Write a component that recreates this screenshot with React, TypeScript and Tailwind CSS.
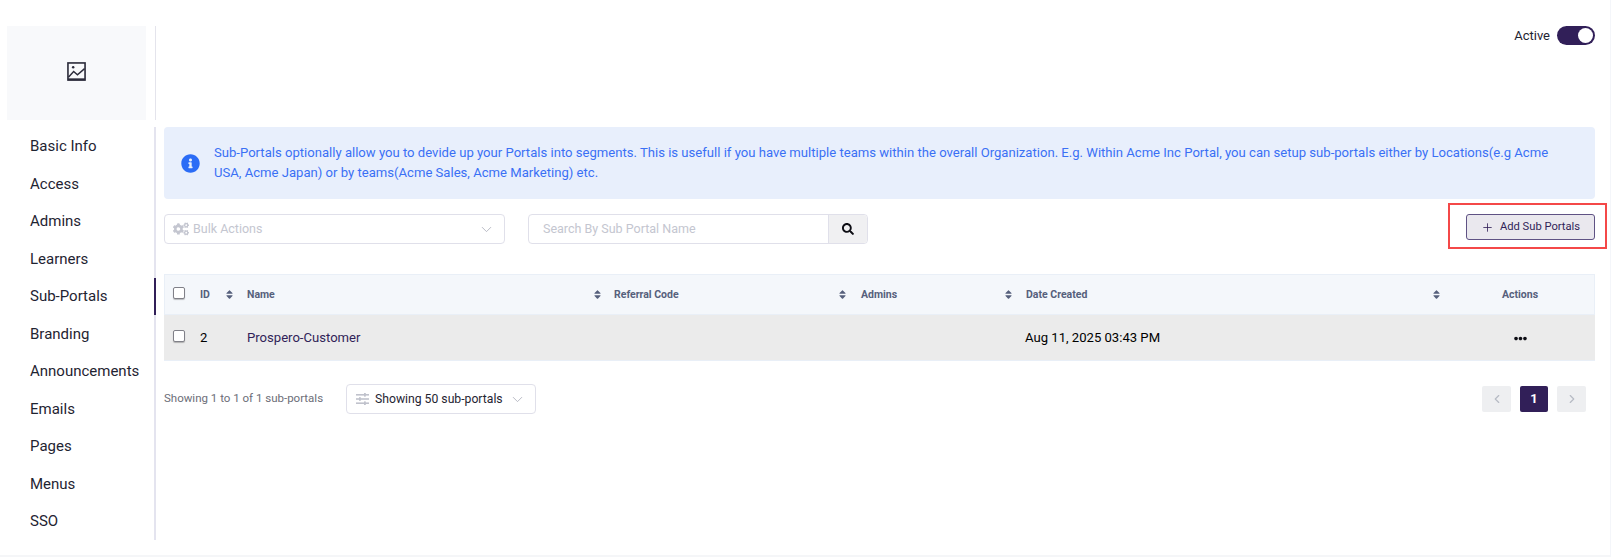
import React from "react"
import { FaInfoCircle, FaCogs, FaSearch, FaSort, FaEllipsisH } from "react-icons/fa"
import { ChevronDown, ChevronLeft, ChevronRight, Plus } from "lucide-react"

const navItems = ["Basic Info", "Access", "Admins", "Learners", "Sub-Portals", "Branding", "Announcements", "Emails", "Pages", "Menus", "SSO"]

const ImageIcon = () => (
    <svg width="19" height="19" viewBox="0 0 20 20" fill="none" stroke="#2b2b3a" strokeWidth="1.7">
        <rect x="1" y="1" width="18" height="18" />
        <path d="M1.5 16L7 10l4 3.5L18.5 7" strokeWidth="1.5" />
        <path d="M1 18.2h18" strokeWidth="2" />
        <circle cx="6.5" cy="5.5" r="1.3" fill="#2b2b3a" stroke="none" />
    </svg>
)

const SliderIcon = () => (
    <svg width="13" height="12" viewBox="0 0 13 12" className="mr-[6px]" fill="#c0c2cc">
        <rect x="0" y="1" width="13" height="1.6" />
        <rect x="8" y="0" width="1.8" height="3.6" />
        <rect x="0" y="5.2" width="13" height="1.6" />
        <rect x="3" y="4.2" width="1.8" height="3.6" />
        <rect x="0" y="9.4" width="13" height="1.6" />
        <rect x="8" y="8.4" width="1.8" height="3.6" />
    </svg>
)

const Checkbox = () => (
    <div className="w-[12px] h-[12px] rounded-[2px] border border-[#808088] bg-white shadow-[0_1px_1px_rgba(0,0,0,0.25)]" />
)

const Th = ({ label, className }: { label: string; className: string }) => (
    <div className={"flex items-center justify-between " + className}>
        <span>{label}</span>
        <FaSort className="text-[11px] text-[#56607c]" />
    </div>
)

const App = () => {
    return (
        <div className="w-full h-[557px] bg-white border-r border-[#f4f6fa] flex flex-col overflow-hidden font-['Roboto',sans-serif] text-[#1f2432]">
            <div className="flex flex-1 flex-col pt-[26px] pl-[7px] pr-[15px]">
                <div className="flex h-[94px]">
                    <div className="w-[139px] bg-[#f8f9fb] flex items-center justify-center pb-[4px]">
                        <ImageIcon />
                    </div>
                    <div className="ml-[9px] w-[1px] bg-[#e4e4ec]" />
                    <div className="flex-1 flex justify-end items-start">
                        <div className="flex items-center gap-[7px]">
                            <span className="text-[13px]">Active</span>
                            <div className="w-[38px] h-[19px] rounded-full bg-[#311f58] flex items-center justify-end pr-[2px]">
                                <div className="w-[15px] h-[15px] rounded-full bg-white" />
                            </div>
                        </div>
                    </div>
                </div>

                <div className="flex mt-[7px] h-[413px]">
                    <nav className="w-[149px] border-r-2 border-[#e4e4ef] flex flex-col pt-[1px]">
                        {navItems.map((item) => (
                            <div key={item} className={"h-[37.5px] pl-[23px] flex items-center text-[15px] -mr-[2px] " + (item === "Sub-Portals" ? "border-r-2 border-[#311f58]" : "")}>
                                {item}
                            </div>
                        ))}
                    </nav>

                    <main className="flex-1 ml-[8px] min-w-0">
                        <div className="h-[72px] rounded bg-[#e8effc] flex items-center pl-[17px] pr-[30px] text-[#3a70f5] text-[13.1px] leading-[20px]">
                            <FaInfoCircle className="text-[19px] shrink-0 text-[#2b6cf6] mr-[14px]" />
                            <p>Sub-Portals optionally allow you to devide up your Portals into segments. This is usefull if you have multiple teams within the overall Organization. E.g. Within Acme Inc Portal, you can setup sub-portals either by Locations(e.g Acme USA, Acme Japan) or by teams(Acme Sales, Acme Marketing) etc.</p>
                        </div>

                        <div className="flex items-start mt-[15px] h-[60px]">
                            <div className="w-[341px] h-[30px] rounded border border-[#e0e0ea] flex items-center pl-[8px] pr-[9px] text-[12.5px] text-[#c4c6d0]">
                                <FaCogs className="text-[16px] mr-[4px]" />
                                <span className="flex-1">Bulk Actions</span>
                                <ChevronDown size={17} strokeWidth={1.2} className="text-[#aeb0bc]" />
                            </div>
                            <div className="ml-[23px] w-[340px] h-[30px] rounded border border-[#e0e0ea] flex items-center text-[12.5px] text-[#c4c6d0]">
                                <span className="flex-1 pl-[14px]">Search By Sub Portal Name</span>
                                <div className="w-[39px] h-full bg-[#f0f0f2] border-l border-[#e0e0ea] flex items-center justify-center rounded-r">
                                    <FaSearch className="text-[12px] text-[#0d0d14]" />
                                </div>
                            </div>
                            <div className="ml-auto relative">
                                <div className="absolute -left-[18px] -top-[11px] w-[159px] h-[46px] border-2 border-[#f44848]" />
                                <button className="w-[129px] h-[26px] rounded-[3px] border border-[#5f5284] bg-[#eae8ee] flex items-center justify-center gap-[6px] text-[11.2px] text-[#311f58]">
                                    <Plus size={13} strokeWidth={1.5} />
                                    Add Sub Portals
                                </button>
                            </div>
                        </div>

                        <div>
                            <div className="h-[41px] bg-[#f4f7fb] border border-[#e9eff7] text-[10.5px] font-bold text-[#56607c] flex items-center pl-[8px]">
                                <div className="mr-[15px] mb-[4px]"><Checkbox /></div>
                                <Th label="ID" className="w-[35px]" />
                                <Th label="Name" className="w-[356px] ml-[12px]" />
                                <Th label="Referral Code" className="w-[234px] ml-[11px]" />
                                <Th label="Admins" className="w-[153px] ml-[13px]" />
                                <Th label="Date Created" className="w-[416px] ml-[12px]" />
                                <span className="ml-[60px]">Actions</span>
                            </div>
                            <div className="h-[46px] pt-[1px] bg-[#ebebeb] border-b border-[#e9eff7] flex items-center pl-[9px] text-[13.1px]">
                                <div className="mr-[15px] mb-[4px]"><Checkbox /></div>
                                <span className="w-[47px] text-black">2</span>
                                <span className="w-[778px] text-[#311f58]">Prospero-Customer</span>
                                <span className="w-[489px] text-black">Aug 11, 2025 03:43 PM</span>
                                <FaEllipsisH className="text-[13px] text-[#0d0d14]" />
                            </div>
                        </div>

                        <div className="flex items-center mt-[23px]">
                            <span className="text-[11.5px] text-[#6c6e78] w-[182px]">Showing 1 to 1 of 1 sub-portals</span>
                            <div className="w-[190px] h-[30px] rounded border border-[#e0e0ea] flex items-center pl-[9px] pr-[9px] text-[12.2px]">
                                <SliderIcon />
                                <span className="flex-1">Showing 50 sub-portals</span>
                                <ChevronDown size={17} strokeWidth={1.2} className="text-[#aeb0bc]" />
                            </div>
                            <div className="ml-auto mr-[9px] flex items-center gap-[9px]">
                                <div className="w-[29px] h-[26px] rounded-[2px] bg-[#eeeff1] flex items-center justify-center text-[#b6bac4]"><ChevronLeft size={14} /></div>
                                <div className="w-[28px] h-[26px] rounded-[2px] bg-[#311f58] flex items-center justify-center text-white text-[13px] font-bold">1</div>
                                <div className="w-[29px] h-[26px] rounded-[2px] bg-[#eeeff1] flex items-center justify-center text-[#b6bac4]"><ChevronRight size={14} /></div>
                            </div>
                        </div>
                    </main>
                </div>
            </div>
            <div className="h-[2px] bg-[#f5f6f8]" />
        </div>
    )
}

export default App
